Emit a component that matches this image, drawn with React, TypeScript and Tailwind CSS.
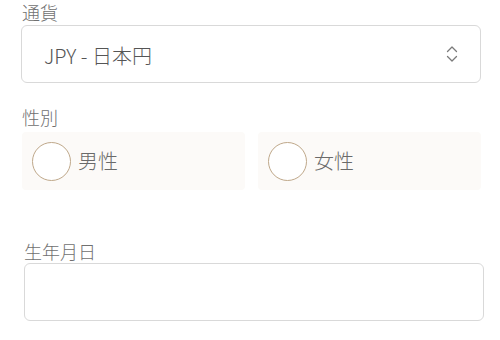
import React from "react";

const font = { fontFamily: '"Noto Sans CJK JP", "Noto Sans", sans-serif' };

function Radio({ label }: { label: string }) {
  return (
    <div className="flex h-[58px] flex-1 items-center rounded-[4px] bg-[#fcfaf8] pl-[10px]">
      <span className="block h-[39px] w-[39px] rounded-full border-[1.5px] border-[#bfa88a] bg-white" />
      <span className="ml-[7px] text-[20px] leading-[24px] font-light text-[#6a6a6a]">{label}</span>
    </div>
  );
}

export default function App() {
  return (
    <div className="h-[340px] w-[500px] bg-white" style={font}>
      <div className="px-[21px] pt-[1px] w-[481px]">
        <div className="text-[18px] leading-[22px] font-light text-[#707070] pl-[1px]">通貨</div>
        <div className="mt-[2px] flex h-[58px] w-[460px] items-center justify-between rounded-[6px] border border-[#d9d9d9] pl-[22px] pr-[22px]">
          <span className="pt-[4px] text-[20px] leading-[24px] font-light text-[#555555]">JPY - 日本円</span>
          <svg width="12" height="20" viewBox="0 0 12 20" fill="none" stroke="#7a7a7a" strokeWidth="1.3" strokeLinecap="round" strokeLinejoin="round">
            <path d="M1.5 7.5 L6 3 L10.5 7.5" />
            <path d="M1.5 12.5 L6 17 L10.5 12.5" />
          </svg>
        </div>
        <div className="mt-[23px] text-[18px] leading-[22px] font-light text-[#707070] pl-[1px]">性別</div>
        <div className="mt-[4px] flex gap-[13px] pl-[1px] w-[460px]">
          <Radio label="男性" />
          <Radio label="女性" />
        </div>
      </div>
      <div className="pl-[24px] mt-[50px]">
        <div className="text-[18px] leading-[22px] font-light text-[#707070]">生年月日</div>
        <div className="mt-[1px] h-[58px] w-[460px] rounded-[6px] border-[1.5px] border-[#d9d9d9]" />
      </div>
    </div>
  );
}
